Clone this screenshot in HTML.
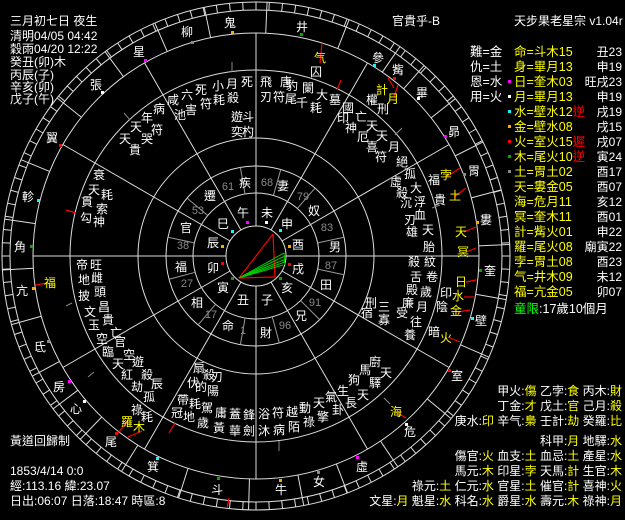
<!DOCTYPE html>
<html><head><meta charset="utf-8">
<style>
html,body{margin:0;padding:0;background:#000;}
body{width:625px;height:520px;position:relative;overflow:hidden;font-family:"Liberation Sans","WenQuanYi Zen Hei","Noto Sans CJK TC",sans-serif;color:#fff;}
svg{position:absolute;left:0;top:0;}
.c{position:absolute;font-size:12px;line-height:12px;transform:translate(-50%,-50%);white-space:nowrap;}
.g{color:#8a8a8a;font-size:11px;}
.y{color:#ff0;}
.r{color:#f00;}
.gr{color:#0f0;}
.t{position:absolute;font-size:12.5px;line-height:14px;white-space:nowrap;}
.s{font-size:12px;}
.rt{position:absolute;right:3px;font-size:12px;line-height:14px;white-space:nowrap;text-align:right;}
.d{position:absolute;width:3px;height:3px;}
</style></head><body>
<svg id="s" width="625" height="520" xmlns="http://www.w3.org/2000/svg">
<g id="gg" stroke="#ddd" stroke-width="1" fill="none"></g>
<g stroke="#f00" stroke-width="1.2">
<line x1="322" y1="43" x2="320" y2="63"/>
<line x1="341" y1="80" x2="337" y2="90"/>
<line x1="388" y1="78" x2="394" y2="88"/>
<line x1="398" y1="85" x2="394" y2="97"/>
<line x1="460" y1="168" x2="446" y2="177"/>
<line x1="466" y1="188" x2="454" y2="197"/>
<line x1="476" y1="227" x2="464" y2="232"/>
<line x1="476" y1="248" x2="466" y2="252"/>
<line x1="476" y1="280" x2="466" y2="282"/>
<line x1="474" y1="297" x2="464" y2="297"/>
<line x1="470" y1="310" x2="458" y2="312"/>
<line x1="460" y1="342" x2="450" y2="338"/>
<line x1="406" y1="418" x2="398" y2="413"/>
<line x1="118" y1="433" x2="127" y2="422"/>
<line x1="128" y1="437" x2="142" y2="431"/>
<line x1="36" y1="285" x2="46" y2="283"/>
<line x1="66" y1="210" x2="76" y2="213"/>
<line x1="175" y1="423" x2="169" y2="433"/>
<line x1="229" y1="498" x2="227" y2="508"/>
<line x1="273" y1="234" x2="239" y2="278"/>
<line x1="239" y1="278" x2="275" y2="277"/>
<line x1="275" y1="277" x2="273" y2="234"/>
</g>
<g stroke="#0c0" stroke-width="1">
<line x1="239" y1="278" x2="284" y2="253"/>
<line x1="239" y1="278" x2="285" y2="256"/>
<line x1="239" y1="278" x2="286" y2="259"/>
<line x1="239" y1="278" x2="285" y2="262"/>
<line x1="239" y1="278" x2="283" y2="265"/>
<line x1="284" y1="253" x2="285" y2="265"/>
</g>
<g stroke="#888" stroke-width="1">
<line x1="232" y1="62" x2="232" y2="72"/>
<line x1="124" y1="113" x2="130" y2="120"/>
<line x1="402" y1="128" x2="395" y2="135"/>
<line x1="66" y1="306" x2="72" y2="303"/>
<line x1="88" y1="377" x2="94" y2="372"/>
<line x1="384" y1="398" x2="390" y2="404"/>
<line x1="279" y1="441" x2="279" y2="451"/>
<line x1="440" y1="205" x2="432" y2="208"/>
</g>
</svg>
<script>
(function(){
var g=document.getElementById('gg'),cx=256,cy=256,ns='http://www.w3.org/2000/svg';
function el(n,a){var e=document.createElementNS(ns,n);for(var k in a)e.setAttribute(k,a[k]);g.appendChild(e);return e;}
[254,246,223,186,118,90,63,30].forEach(function(r){el('circle',{cx:cx,cy:cy,r:r});});
function L(a,r1,r2,col){var t=a*Math.PI/180;el('line',{x1:cx+r1*Math.cos(t),y1:cy-r1*Math.sin(t),x2:cx+r2*Math.cos(t),y2:cy-r2*Math.sin(t),stroke:col||'#ddd'});}
for(var k=0;k<12;k++)L(k*30,30,223);
for(var a=0;a<360;a+=3)L(a,246,254);
[100,74,49,12,-12,-45,-75,-100,-130,-165,168,140].forEach(function(a){L(a,63,90,'#999');});
var m=[[230,23],[187,32],[302,27],[139,52],[378,58],[398,70],[96,85],[422,93],[52,138],[454,132],[28,197],[474,171],[20,247],[486,220],[490,271],[22,291],[481,321],[40,347],[457,376],[59,387],[76,409],[410,432],[111,442],[362,467],[153,467],[319,482],[217,490],[281,490]];
var an=m.map(function(p){var v=Math.atan2(cy-p[1],p[0]-cx)*180/Math.PI;return v<0?v+360:v;}).sort(function(a,b){return a-b;});
for(var i=0;i<an.length;i++){var b=an[(i+1)%an.length];if(b<an[i])b+=360;L((an[i]+b)/2,223,254);}
})();
</script>

<div class="t s" style="left:10px;top:14px">三月初七日 夜生</div>
<div class="t s" style="left:10px;top:29px">清明04/05 04:42</div>
<div class="t s" style="left:10px;top:42px">穀雨04/20 12:22</div>
<div class="t s" style="left:10px;top:55px">癸丑(卯)木</div>
<div class="t s" style="left:10px;top:68px">丙辰(子)</div>
<div class="t s" style="left:10px;top:80px">辛亥(卯)</div>
<div class="t s" style="left:10px;top:92px">戊子(午)</div>
<div class="t s" style="left:392px;top:14px">官貴乎-B</div>
<div class="t s" style="left:514px;top:14px">天步果老星宗 v1.04r</div>

<div class="t" style="left:470px;top:45px">難=金</div>
<div class="t" style="left:470px;top:60px">仇=土</div>
<div class="t" style="left:470px;top:75px">恩=水</div>
<div class="t" style="left:470px;top:90px">用=火</div>
<div class="t y" style="left:514px;top:45px">命=斗木15</div>
<div class="t y" style="left:514px;top:60px">身=畢月13</div>
<div class="t y" style="left:514px;top:75px">日=奎木03</div>
<div class="t y" style="left:514px;top:90px">月=畢月13</div>
<div class="t y" style="left:514px;top:105px">水=壁水12<span class="r">逆</span></div>
<div class="t y" style="left:514px;top:120px">金=壁水08</div>
<div class="t y" style="left:514px;top:135px">火=室火15<span class="r">遲</span></div>
<div class="t y" style="left:514px;top:150px">木=尾火10<span class="r">逆</span></div>
<div class="t y" style="left:514px;top:165px">土=胃土02</div>
<div class="t y" style="left:514px;top:180px">天=婁金05</div>
<div class="t y" style="left:514px;top:195px">海=危月11</div>
<div class="t y" style="left:514px;top:210px">冥=奎木11</div>
<div class="t y" style="left:514px;top:225px">計=觜火01</div>
<div class="t y" style="left:514px;top:240px">羅=尾火08</div>
<div class="t y" style="left:514px;top:255px">孛=胃土08</div>
<div class="t y" style="left:514px;top:270px">气=井木09</div>
<div class="t y" style="left:514px;top:285px">福=亢金05</div>
<div class="rt" style="top:45px">丑23</div>
<div class="rt" style="top:60px">申19</div>
<div class="rt" style="top:75px">旺戌23</div>
<div class="rt" style="top:90px">申19</div>
<div class="rt" style="top:105px">戌19</div>
<div class="rt" style="top:120px">戌15</div>
<div class="rt" style="top:135px">戌07</div>
<div class="rt" style="top:150px">寅24</div>
<div class="rt" style="top:165px">酉17</div>
<div class="rt" style="top:180px">酉07</div>
<div class="rt" style="top:195px">亥12</div>
<div class="rt" style="top:210px">酉01</div>
<div class="rt" style="top:225px">申22</div>
<div class="rt" style="top:240px">廟寅22</div>
<div class="rt" style="top:255px">酉23</div>
<div class="rt" style="top:270px">未12</div>
<div class="rt" style="top:285px">卯07</div>
<div class="d" style="left:508px;top:80px;background:#f0f"></div>
<div class="d" style="left:508px;top:95px;background:#fff"></div>
<div class="d" style="left:508px;top:110px;background:#0ff"></div>
<div class="d" style="left:508px;top:125px;background:#fa0"></div>
<div class="d" style="left:508px;top:140px;background:#f00"></div>
<div class="d" style="left:508px;top:155px;background:#0a0"></div>
<div class="d" style="left:508px;top:170px;background:#888"></div>
<div class="t" style="left:514px;top:302px"><span class="gr">童限</span>:17歲10個月</div>

<div class="rt" style="top:384px">甲火:<span class="y">傷</span> 乙孛:<span class="y">食</span> 丙木:<span class="y">財</span></div>
<div class="rt" style="top:399px">丁金:<span class="y">才</span> 戊土:<span class="y">官</span> 己月:<span class="y">殺</span></div>
<div class="rt" style="top:414px">庚水:<span class="y">印</span> 辛气:<span class="y">梟</span> 壬計:<span class="y">劫</span> 癸羅:<span class="y">比</span></div>
<div class="rt" style="top:434px">科甲:<span class="y">月</span> 地驛:<span class="y">水</span></div>
<div class="rt" style="top:449px">傷官:<span class="y">火</span> 血支:<span class="y">土</span> 血忌:<span class="y">土</span> 產星:<span class="y">水</span></div>
<div class="rt" style="top:464px">馬元:<span class="y">木</span> 印星:<span class="y">孛</span> 天馬:<span class="y">計</span> 生官:<span class="y">木</span></div>
<div class="rt" style="top:479px">祿元:<span class="y">土</span> 仁元:<span class="y">水</span> 官星:<span class="y">土</span> 催官:<span class="y">計</span> 喜神:<span class="y">火</span></div>
<div class="rt" style="top:494px">文星:<span class="y">月</span> 魁星:<span class="y">水</span> 科名:<span class="y">水</span> 爵星:<span class="y">水</span> 壽元:<span class="y">木</span> 祿神:<span class="y">月</span></div>

<div class="t s" style="left:10px;top:434px">黃道回歸制</div>
<div class="t s" style="left:10px;top:464px">1853/4/14 0:0</div>
<div class="t s" style="left:10px;top:479px">經:113.16 緯:23.07</div>
<div class="t s" style="left:10px;top:494px">日出:06:07 日落:18:47 時區:8</div>

<!-- mansions -->
<div class="c" style="left:230px;top:23px">鬼</div><div class="c" style="left:187px;top:32px">柳</div>
<div class="c" style="left:302px;top:27px">井</div><div class="c" style="left:139px;top:52px">星</div>
<div class="c" style="left:378px;top:58px">參</div><div class="c" style="left:398px;top:70px">觜</div>
<div class="c" style="left:96px;top:85px">張</div><div class="c" style="left:422px;top:93px">畢</div>
<div class="c" style="left:52px;top:138px">翼</div><div class="c" style="left:454px;top:132px">昴</div>
<div class="c" style="left:28px;top:197px">軫</div><div class="c" style="left:474px;top:171px">胃</div>
<div class="c" style="left:20px;top:247px">角</div><div class="c" style="left:486px;top:220px">婁</div>
<div class="c" style="left:490px;top:271px">奎</div><div class="c" style="left:22px;top:291px">亢</div>
<div class="c" style="left:481px;top:321px">壁</div><div class="c" style="left:40px;top:347px">氐</div>
<div class="c" style="left:457px;top:376px">室</div><div class="c" style="left:59px;top:387px">房</div>
<div class="c" style="left:76px;top:409px">心</div><div class="c" style="left:410px;top:432px">危</div>
<div class="c" style="left:111px;top:442px">尾</div><div class="c" style="left:362px;top:467px">虛</div>
<div class="c" style="left:153px;top:467px">箕</div><div class="c" style="left:319px;top:482px">女</div>
<div class="c" style="left:217px;top:490px">斗</div><div class="c" style="left:281px;top:490px">牛</div>
<!-- mansion dots -->
<div class="d" style="left:231px;top:31px;background:#fa0"></div><div class="d" style="left:300px;top:33px;background:#0a0"></div>
<div class="d" style="left:191px;top:41px;background:#888"></div><div class="d" style="left:144px;top:59px;background:#f0f"></div>
<div class="d" style="left:373px;top:64px;background:#0ff"></div><div class="d" style="left:393px;top:77px;background:#f00"></div>
<div class="d" style="left:101px;top:91px;background:#fff"></div><div class="d" style="left:417px;top:97px;background:#fff"></div>
<div class="d" style="left:59px;top:144px;background:#f00"></div><div class="d" style="left:444px;top:135px;background:#f0f"></div>
<div class="d" style="left:37px;top:199px;background:#0ff"></div><div class="d" style="left:463px;top:173px;background:#888"></div>
<div class="d" style="left:30px;top:245px;background:#0a0"></div><div class="d" style="left:476px;top:221px;background:#fa0"></div>
<div class="d" style="left:479px;top:269px;background:#0a0"></div><div class="d" style="left:32px;top:287px;background:#fa0"></div>
<div class="d" style="left:471px;top:317px;background:#0ff"></div><div class="d" style="left:47px;top:340px;background:#888"></div>
<div class="d" style="left:448px;top:369px;background:#f00"></div><div class="d" style="left:68px;top:380px;background:#f0f"></div>
<div class="d" style="left:83px;top:400px;background:#fff"></div><div class="d" style="left:405px;top:423px;background:#fff"></div>
<div class="d" style="left:115px;top:432px;background:#f00"></div><div class="d" style="left:156px;top:457px;background:#0ff"></div>
<div class="d" style="left:356px;top:456px;background:#f0f"></div><div class="d" style="left:317px;top:471px;background:#888"></div>
<div class="d" style="left:217px;top:477px;background:#0a0"></div><div class="d" style="left:279px;top:479px;background:#fa0"></div>
<!-- planets -->
<div class="c y" style="left:320px;top:58px">气</div><div class="c" style="left:316px;top:72px">囚</div>
<div class="c y" style="left:382px;top:90px">計</div><div class="c y" style="left:393px;top:99px">月</div>
<div class="c y" style="left:446px;top:175px">孛</div><div class="c y" style="left:455px;top:196px">土</div>
<div class="c y" style="left:461px;top:232px">天</div><div class="c y" style="left:463px;top:252px">冥</div>
<div class="c y" style="left:461px;top:282px">日</div><div class="c y" style="left:458px;top:296px">水</div>
<div class="c y" style="left:456px;top:311px">金</div><div class="c y" style="left:446px;top:338px">火</div>
<div class="c y" style="left:396px;top:412px">海</div><div class="c y" style="left:127px;top:422px">羅</div>
<div class="c y" style="left:139px;top:427px">木</div><div class="c y" style="left:50px;top:283px">福</div>
<!-- inner ring -->
<div class="c g" style="left:228px;top:187px">61</div><div class="c" style="left:245px;top:183px">疾</div>
<div class="c g" style="left:267px;top:183px">68</div><div class="c" style="left:283px;top:186px">妻</div>
<div class="c g" style="left:303px;top:197px">79</div><div class="c" style="left:314px;top:211px">奴</div>
<div class="c g" style="left:327px;top:228px">83</div><div class="c" style="left:335px;top:247px">男</div>
<div class="c g" style="left:331px;top:266px">87</div><div class="c" style="left:326px;top:285px">田</div>
<div class="c g" style="left:315px;top:303px">91</div><div class="c" style="left:301px;top:316px">兄</div>
<div class="c g" style="left:285px;top:326px">96</div><div class="c" style="left:266px;top:333px">財</div>
<div class="c g" style="left:243px;top:331px">1</div><div class="c" style="left:228px;top:326px">命</div>
<div class="c g" style="left:211px;top:315px">17</div><div class="c" style="left:197px;top:303px">相</div>
<div class="c g" style="left:187px;top:284px">27</div><div class="c" style="left:181px;top:267px">福</div>
<div class="c g" style="left:183px;top:246px">38</div><div class="c" style="left:186px;top:228px">官</div>
<div class="c g" style="left:198px;top:211px">53</div><div class="c" style="left:210px;top:196px">遷</div>
<div class="c" style="left:243px;top:213px">午</div><div class="c" style="left:267px;top:213px">未</div>
<div class="c" style="left:287px;top:224px">申</div><div class="c" style="left:298px;top:245px">酉</div>
<div class="c" style="left:298px;top:269px">戌</div><div class="c" style="left:287px;top:288px">亥</div>
<div class="c" style="left:267px;top:300px">子</div><div class="c" style="left:243px;top:300px">丑</div>
<div class="c" style="left:223px;top:288px">寅</div><div class="c" style="left:213px;top:268px">卯</div>
<div class="c" style="left:213px;top:243px">辰</div><div class="c" style="left:223px;top:224px">巳</div>
<div class="d" style="left:246px;top:221px;background:#f0f"></div><div class="d" style="left:265px;top:221px;background:#fff"></div>
<div class="d" style="left:279px;top:229px;background:#0ff"></div><div class="d" style="left:288px;top:245px;background:#fa0"></div>
<div class="d" style="left:288px;top:263px;background:#f00"></div><div class="d" style="left:231px;top:230px;background:#0ff"></div>
<div class="d" style="left:221px;top:245px;background:#fa0"></div><div class="d" style="left:221px;top:262px;background:#f00"></div>
<div class="d" style="left:231px;top:277px;background:#0a0"></div><div class="d" style="left:279px;top:277px;background:#0a0"></div>
<!-- upper stars -->
<div class="c" style="left:247px;top:82px">死</div><div class="c" style="left:266px;top:82px">飛</div><div class="c" style="left:286px;top:82px">唐</div>
<div class="c" style="left:292px;top:86px">豹</div><div class="c" style="left:308px;top:88px">闌</div><div class="c" style="left:322px;top:95px">大</div><div class="c" style="left:335px;top:100px">墓</div>
<div class="c" style="left:266px;top:97px">刃</div><div class="c" style="left:279px;top:97px">符</div><div class="c" style="left:291px;top:99px">尾</div>
<div class="c" style="left:302px;top:103px">千</div><div class="c" style="left:316px;top:108px">耗</div>
<div class="c" style="left:218px;top:86px">小</div><div class="c" style="left:232px;top:84px">月</div><div class="c" style="left:219px;top:100px">耗</div><div class="c" style="left:233px;top:98px">殺</div>
<div class="c" style="left:201px;top:90px">死</div><div class="c" style="left:206px;top:104px">符</div><div class="c" style="left:187px;top:95px">六</div><div class="c" style="left:191px;top:110px">害</div>
<div class="c" style="left:173px;top:100px">咸</div><div class="c" style="left:180px;top:115px">池</div><div class="c" style="left:159px;top:109px">病</div>
<div class="c" style="left:147px;top:118px">年</div><div class="c" style="left:157px;top:130px">符</div><div class="c" style="left:136px;top:127px">天</div><div class="c" style="left:147px;top:139px">哭</div>
<div class="c" style="left:125px;top:139px">天</div><div class="c" style="left:135px;top:150px">貴</div>
<div class="c" style="left:237px;top:117px">遊</div><div class="c" style="left:248px;top:117px">斗</div><div class="c" style="left:237px;top:132px">奕</div><div class="c" style="left:248px;top:132px">杓</div>
<div class="c" style="left:372px;top:100px">權</div><div class="c" style="left:383px;top:109px">刑</div>
<div class="c" style="left:348px;top:108px">國</div><div class="c" style="left:361px;top:117px">亡</div><div class="c" style="left:343px;top:118px">印</div><div class="c" style="left:351px;top:128px">神</div>
<div class="c" style="left:372px;top:126px">天</div><div class="c" style="left:363px;top:137px">厄</div><div class="c" style="left:382px;top:136px">天</div><div class="c" style="left:372px;top:147px">喜</div>
<div class="c" style="left:394px;top:147px">月</div><div class="c" style="left:381px;top:157px">符</div><div class="c" style="left:402px;top:162px">絕</div>
<div class="c" style="left:410px;top:174px">孤</div><div class="c" style="left:434px;top:180px">福</div><div class="c" style="left:396px;top:182px">虛</div><div class="c" style="left:416px;top:188px">大</div>
<div class="c" style="left:402px;top:193px">殺</div><div class="c" style="left:420px;top:202px">浮</div><div class="c" style="left:440px;top:200px">貴</div><div class="c" style="left:406px;top:203px">沉</div>
<div class="c" style="left:420px;top:215px">血</div><div class="c" style="left:410px;top:220px">刃</div><div class="c" style="left:428px;top:230px">天</div><div class="c" style="left:412px;top:232px">雄</div><div class="c" style="left:429px;top:247px">胎</div>
<div class="c" style="left:99px;top:175px">衰</div><div class="c" style="left:94px;top:190px">天</div><div class="c" style="left:107px;top:195px">耗</div><div class="c" style="left:87px;top:202px">貫</div>
<div class="c" style="left:102px;top:209px">索</div><div class="c" style="left:86px;top:218px">勾</div><div class="c" style="left:99px;top:222px">神</div>
<!-- lower stars -->
<div class="c" style="left:82px;top:265px">帝</div><div class="c" style="left:96px;top:265px">旺</div><div class="c" style="left:84px;top:280px">地</div><div class="c" style="left:97px;top:278px">雌</div>
<div class="c" style="left:84px;top:296px">披</div><div class="c" style="left:100px;top:292px">頭</div><div class="c" style="left:90px;top:312px">文</div><div class="c" style="left:104px;top:307px">昌</div>
<div class="c" style="left:94px;top:325px">玉</div><div class="c" style="left:108px;top:320px">貴</div><div class="c" style="left:116px;top:333px">亡</div><div class="c" style="left:102px;top:339px">空</div>
<div class="c" style="left:120px;top:342px">官</div><div class="c" style="left:108px;top:352px">臨</div><div class="c" style="left:129px;top:355px">空</div><div class="c" style="left:118px;top:364px">天</div>
<div class="c" style="left:138px;top:362px">遊</div><div class="c" style="left:147px;top:375px">殺</div><div class="c" style="left:127px;top:375px">紅</div><div class="c" style="left:137px;top:387px">劫</div>
<div class="c" style="left:157px;top:384px">辰</div><div class="c" style="left:149px;top:397px">孤</div>
<div class="c" style="left:199px;top:368px">扇</div><div class="c" style="left:209px;top:375px">殺</div><div class="c" style="left:217px;top:377px">刃</div>
<div class="c" style="left:193px;top:383px">伏</div><div class="c" style="left:201px;top:387px">的</div><div class="c" style="left:213px;top:391px">陽</div>
<div class="c" style="left:183px;top:400px">帶</div><div class="c" style="left:195px;top:404px">耗</div><div class="c" style="left:207px;top:408px">駕</div><div class="c" style="left:221px;top:413px">庸</div>
<div class="c" style="left:235px;top:414px">蓋</div><div class="c" style="left:249px;top:415px">鋒</div><div class="c" style="left:264px;top:414px">浴</div><div class="c" style="left:278px;top:413px">符</div>
<div class="c" style="left:292px;top:412px">越</div><div class="c" style="left:305px;top:408px">動</div><div class="c" style="left:319px;top:403px">天</div><div class="c" style="left:331px;top:397px">氣</div>
<div class="c" style="left:343px;top:391px">生</div><div class="c" style="left:351px;top:403px">長</div><div class="c" style="left:338px;top:410px">卦</div>
<div class="c" style="left:354px;top:380px">狗</div><div class="c" style="left:363px;top:395px">天</div><div class="c" style="left:365px;top:370px">馬</div><div class="c" style="left:375px;top:383px">驛</div>
<div class="c" style="left:375px;top:362px">廚</div><div class="c" style="left:386px;top:373px">天</div>
<div class="c" style="left:177px;top:413px">冠</div><div class="c" style="left:189px;top:417px">地</div><div class="c" style="left:203px;top:423px">歲</div><div class="c" style="left:219px;top:428px">黃</div>
<div class="c" style="left:235px;top:431px">華</div><div class="c" style="left:249px;top:431px">劍</div><div class="c" style="left:264px;top:431px">沐</div><div class="c" style="left:279px;top:430px">病</div>
<div class="c" style="left:294px;top:427px">陌</div><div class="c" style="left:309px;top:422px">祿</div><div class="c" style="left:323px;top:417px">擎</div>
<div class="c" style="left:137px;top:410px">祿</div><div class="c" style="left:147px;top:417px">耗</div>
<div class="c" style="left:414px;top:262px">殺</div><div class="c" style="left:430px;top:262px">紋</div><div class="c" style="left:416px;top:277px">舌</div><div class="c" style="left:432px;top:277px">卷</div>
<div class="c" style="left:412px;top:290px">殿</div><div class="c" style="left:426px;top:292px">歲</div><div class="c" style="left:446px;top:293px">印</div><div class="c" style="left:442px;top:307px">陰</div>
<div class="c" style="left:408px;top:303px">廉</div><div class="c" style="left:422px;top:307px">月</div><div class="c" style="left:371px;top:303px">刑</div><div class="c" style="left:367px;top:313px">宿</div>
<div class="c" style="left:384px;top:307px">三</div><div class="c" style="left:384px;top:320px">寡</div><div class="c" style="left:402px;top:313px">受</div><div class="c" style="left:416px;top:322px">往</div>
<div class="c" style="left:410px;top:335px">養</div><div class="c" style="left:434px;top:332px">暗</div>
</body></html>
